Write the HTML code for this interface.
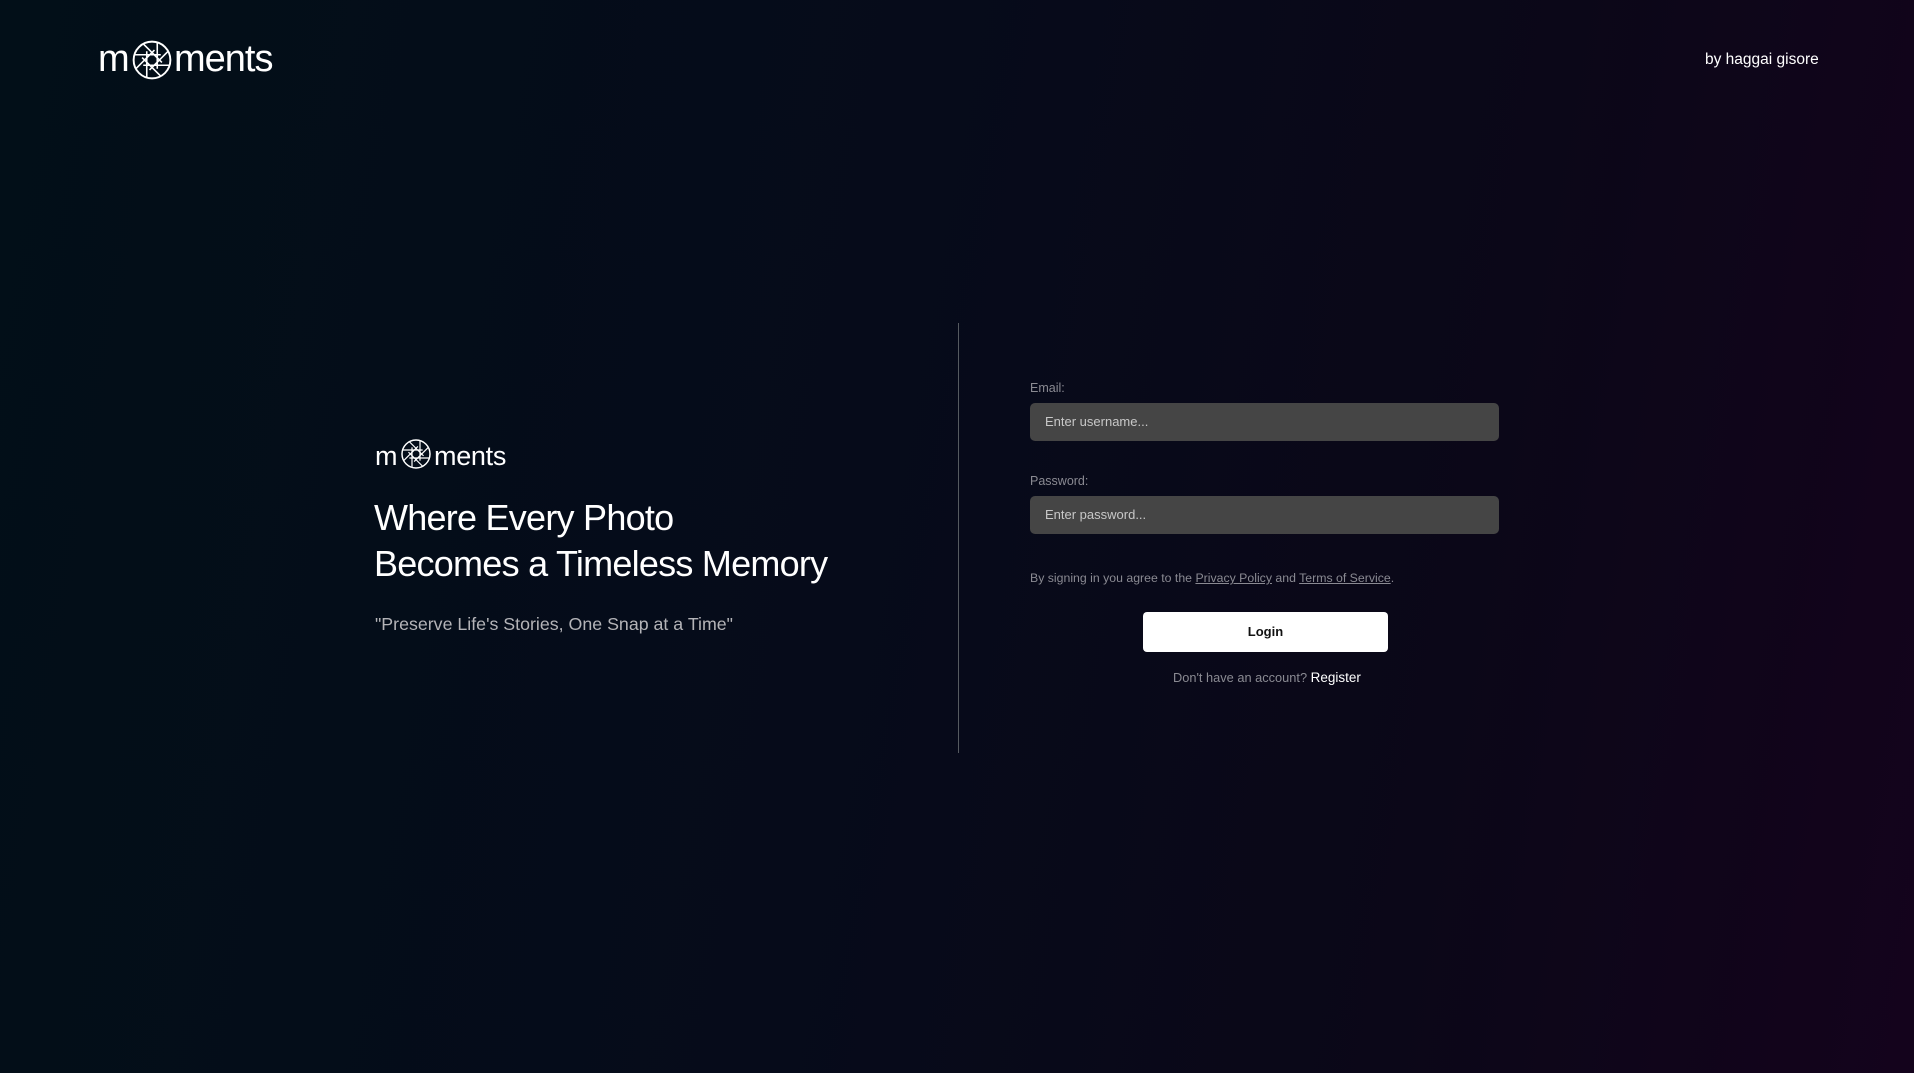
<!DOCTYPE html>
<html><head><meta charset="utf-8"><style>
*{margin:0;padding:0;box-sizing:border-box}
html,body{width:1914px;height:1073px;overflow:hidden}
body{background:linear-gradient(100deg,#020f18 0%,#060b1a 45%,#0b0718 75%,#14031c 100%);font-family:"Liberation Sans",sans-serif;color:#fff;position:relative}
.a{position:absolute;white-space:nowrap}
.lbl{font-size:12.5px;color:#8a8a92}
.inp{position:absolute;left:1030px;width:469px;height:38px;background:#454545;border-radius:5px;font-size:13px;color:#c8c8c8;padding-left:15px;line-height:38px}
</style></head><body>
<svg width="0" height="0" style="position:absolute"><defs>
<g id="ap"><circle cx="12" cy="12" r="10.5" fill="none" stroke="#fff" stroke-width="1.1"/>
<g stroke="#fff" stroke-width="0.9">
<line x1="15" y1="2" x2="15" y2="17"/>
<line x1="15" y1="2" x2="15" y2="17" transform="rotate(45 12 12)"/>
<line x1="15" y1="2" x2="15" y2="17" transform="rotate(90 12 12)"/>
<line x1="15" y1="2" x2="15" y2="17" transform="rotate(135 12 12)"/>
<line x1="15" y1="2" x2="15" y2="17" transform="rotate(180 12 12)"/>
<line x1="15" y1="2" x2="15" y2="17" transform="rotate(225 12 12)"/>
<line x1="15" y1="2" x2="15" y2="17" transform="rotate(270 12 12)"/>
<line x1="15" y1="2" x2="15" y2="17" transform="rotate(315 12 12)"/>
</g></g></defs></svg>

<div class="a" style="left:98px;top:37px;font-size:38px;line-height:44px;letter-spacing:-0.5px">m</div>
<svg class="a" style="left:131px;top:39px" width="42" height="42" viewBox="0 0 24 24"><use href="#ap"/></svg>
<div class="a" style="left:174px;top:37px;font-size:38px;line-height:44px;letter-spacing:-1px">ments</div>

<div class="a" style="left:1705px;top:50px;font-size:15.5px;line-height:20px">by haggai gisore</div>

<div class="a" style="left:958px;top:323px;width:1px;height:430px;background:#555a60"></div>

<div class="a" style="left:375px;top:441px;font-size:27px;line-height:30px">m</div>
<svg class="a" style="left:400px;top:438px" width="32" height="32" viewBox="0 0 24 24"><use href="#ap"/></svg>
<div class="a" style="left:434px;top:441px;font-size:27px;line-height:30px;letter-spacing:-0.3px">ments</div>

<div class="a" style="left:374px;top:495px;font-size:36px;line-height:46px;letter-spacing:-0.75px">Where Every Photo<br>Becomes a Timeless Memory</div>
<div class="a" style="left:375px;top:613px;font-size:17.8px;line-height:22px;color:#b4b4b8">"Preserve Life's Stories, One Snap at a Time"</div>

<div class="a lbl" style="left:1030px;top:381px">Email:</div>
<div class="inp" style="top:403px">Enter username...</div>
<div class="a lbl" style="left:1030px;top:474px">Password:</div>
<div class="inp" style="top:496px">Enter password...</div>

<div class="a" style="left:1030px;top:571px;font-size:12.3px;color:#8a8a92">By signing in you agree to the <u>Privacy Policy</u> and <u>Terms of Service</u>.</div>

<div class="a" style="left:1143px;top:612px;width:245px;height:40px;background:#fff;border-radius:4px;color:#111;font-size:13px;font-weight:bold;text-align:center;line-height:40px">Login</div>

<div class="a" style="left:1173px;top:670px;font-size:12.8px;color:#8a8a92">Don't have an account? <span style="color:#fff;font-size:13.5px">Register</span></div>
</body></html>
